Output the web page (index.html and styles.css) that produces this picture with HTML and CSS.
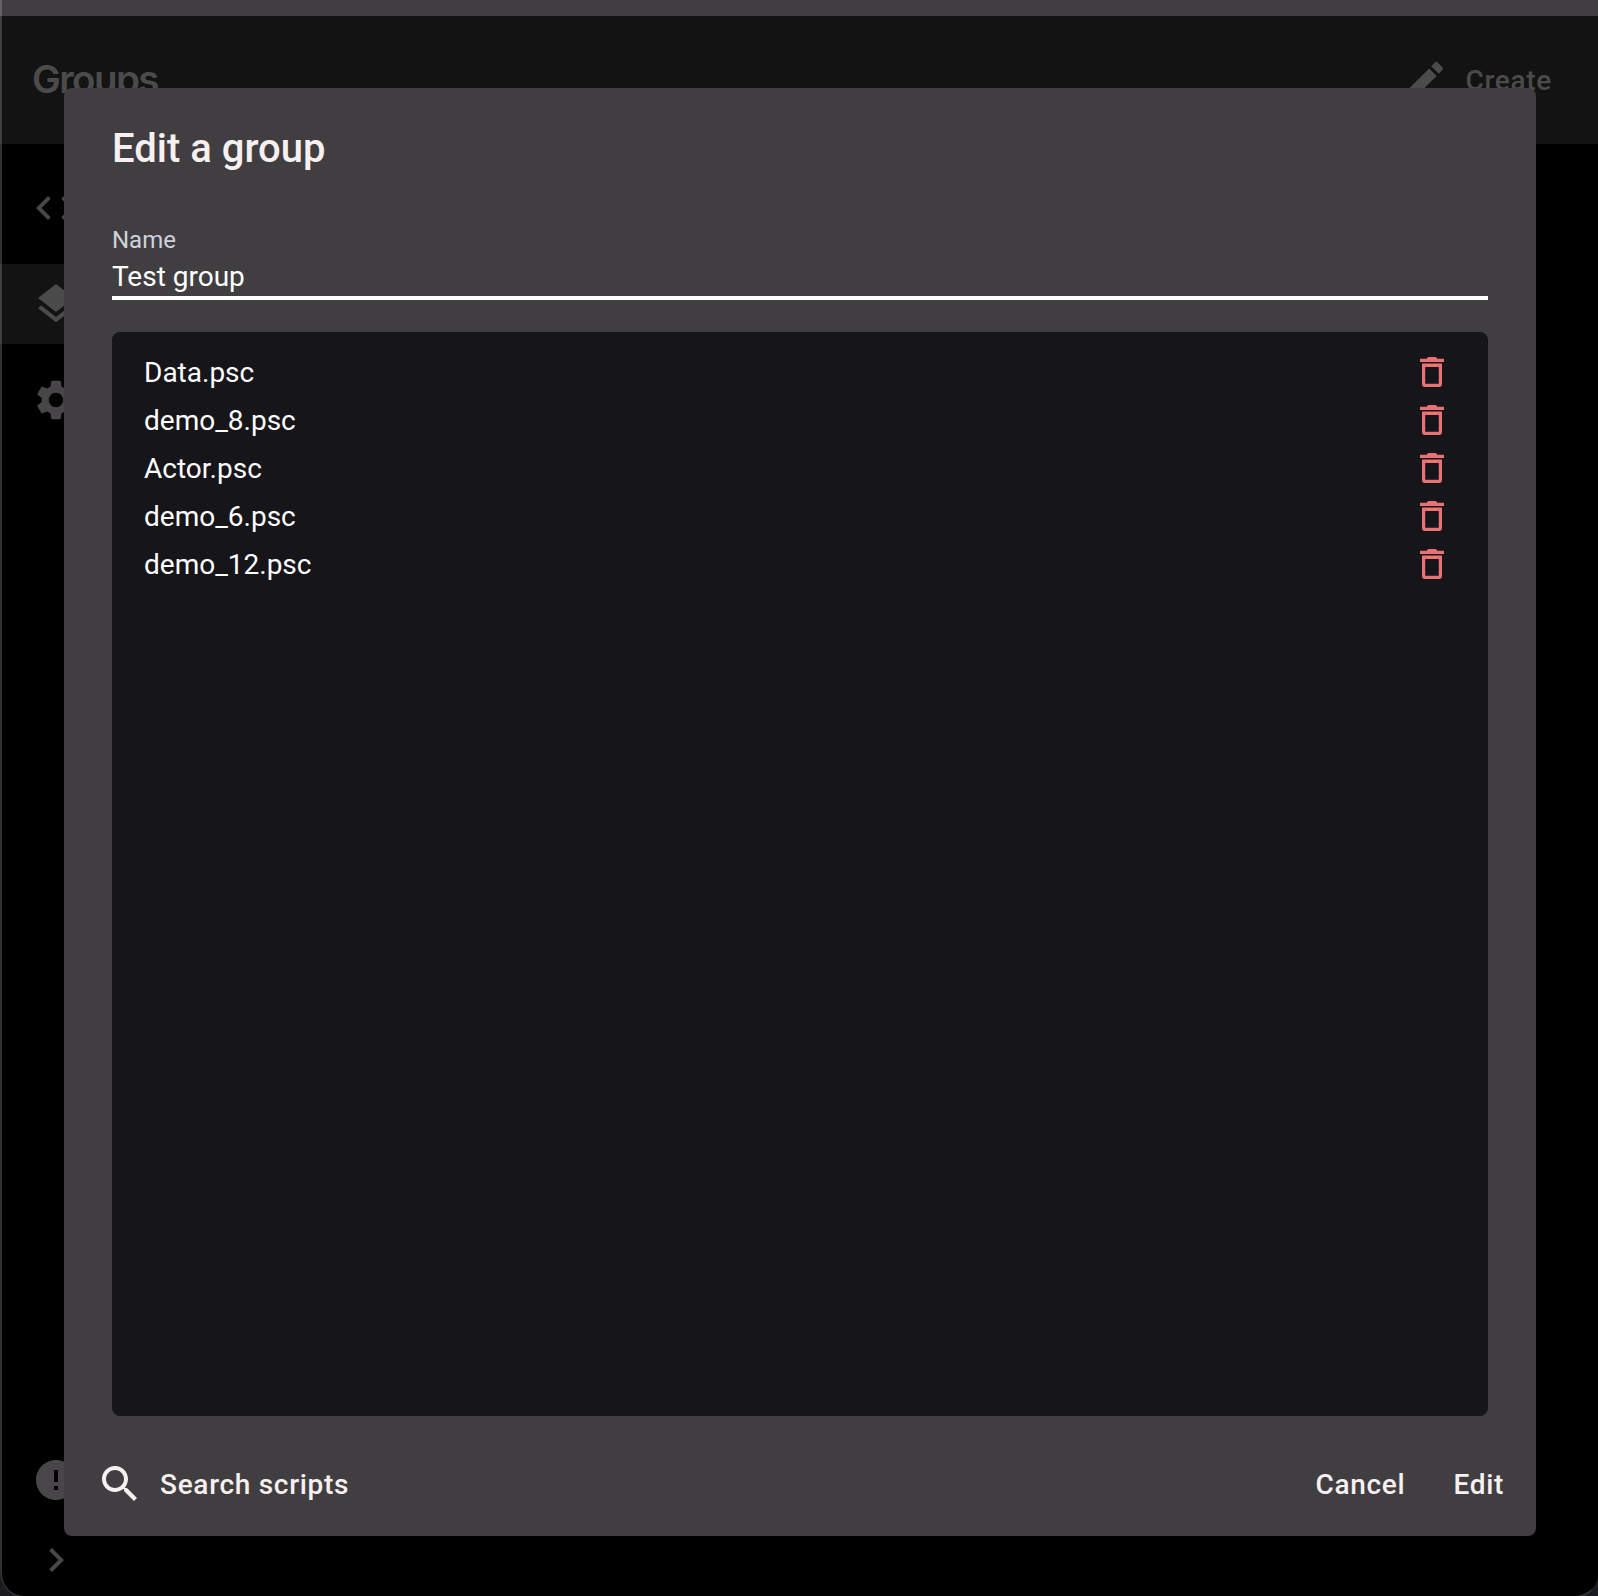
FILE: index.html
```html
<!DOCTYPE html>
<html lang="en">
<head>
<meta charset="utf-8">
<title>Groups</title>
<link rel="stylesheet" href="styles.css">
</head>
<body>
<svg class="defs" aria-hidden="true">
  <symbol id="trash" viewBox="0 0 24 30">
    <path d="M0 1.7h6.5L8.3 0h7.4l1.8 1.7H24V5H0z"/>
    <path fill-rule="evenodd" d="M2 6.6h20V27a3 3 0 0 1-3 3H5a3 3 0 0 1-3-3zM5.2 10v16.8h13.6V10z"/>
  </symbol>
</svg>
<div class="titlebar"></div>
<div class="window">
  <header class="header">
    <h1 class="page-title">Groups</h1>
    <button class="button create">
      <svg class="icon" viewBox="0 0 24 24"><path d="M3 17.25V21h3.75L17.81 9.94l-3.75-3.75L3 17.25zM20.71 7.04c.39-.39.39-1.02 0-1.41l-2.34-2.34a.996.996 0 0 0-1.41 0l-1.83 1.83 3.75 3.75 1.83-1.83z"/></svg>
      <span class="button-text">Create</span>
    </button>
  </header>
  <nav class="nav">
    <a class="nav-item"><svg class="icon" viewBox="0 0 24 24"><path d="M9.4 16.6L4.8 12l4.6-4.6L8 6l-6 6 6 6 1.4-1.4zm5.2 0l4.6-4.6-4.6-4.6L16 6l6 6-6 6-1.4-1.4z"/></svg></a>
    <a class="nav-item selected"><svg class="icon" viewBox="0 0 24 24"><path d="M11.99 18.54l-7.37-5.73L3 14.07l9 7 9-7-1.63-1.27-7.38 5.74zM12 16l7.36-5.73L21 9l-9-7-9 7 1.63 1.27L12 16z"/></svg></a>
    <a class="nav-item"><svg class="icon" viewBox="0 0 24 24"><path d="M19.14 12.94c.04-.3.06-.61.06-.94 0-.32-.02-.64-.07-.94l2.03-1.58c.18-.14.23-.41.12-.61l-1.92-3.32c-.12-.22-.37-.29-.59-.22l-2.39.96c-.5-.38-1.03-.7-1.62-.94l-.36-2.54c-.04-.24-.24-.41-.48-.41h-3.84c-.24 0-.43.17-.47.41l-.36 2.54c-.59.24-1.13.57-1.62.94l-2.39-.96c-.22-.08-.47 0-.59.22L2.74 8.87c-.12.21-.08.47.12.61l2.03 1.58c-.05.3-.09.63-.09.94s.02.64.07.94l-2.03 1.58c-.18.14-.23.41-.12.61l1.92 3.32c.12.22.37.29.59.22l2.39-.96c.5.38 1.03.7 1.62.94l.36 2.54c.05.24.24.41.48.41h3.84c.24 0 .44-.17.47-.41l.36-2.54c.59-.24 1.13-.56 1.62-.94l2.39.96c.22.08.47 0 .59-.22l1.92-3.32c.12-.22.07-.47-.12-.61l-2.01-1.58zM12 15.6c-1.98 0-3.6-1.62-3.6-3.6s1.62-3.6 3.6-3.6 3.6 1.62 3.6 3.6-1.62 3.6-3.6 3.6z"/></svg></a>
    <a class="nav-item about"><svg class="icon" viewBox="0 0 24 24"><path d="M12 2C6.48 2 2 6.48 2 12s4.48 10 10 10 10-4.48 10-10S17.52 2 12 2zm1 15h-2v-2h2v2zm0-4h-2V7h2v6z"/></svg></a>
    <a class="nav-item expand"><svg class="icon" viewBox="0 0 24 24"><path d="M10 6L8.59 7.41 13.17 12l-4.58 4.59L10 18l6-6z"/></svg></a>
  </nav>
</div>
<div class="window-edge"></div>
<div class="overlay">
  <section class="dialog" role="dialog">
    <h2 class="dialog-title">Edit a group</h2>
    <div class="field">
      <label class="field-label">Name</label>
      <div class="field-value">Test group</div>
    </div>
    <ul class="scripts">
      <li class="script">Data.psc<svg class="trash"><use href="#trash"/></svg></li>
      <li class="script">demo_8.psc<svg class="trash"><use href="#trash"/></svg></li>
      <li class="script">Actor.psc<svg class="trash"><use href="#trash"/></svg></li>
      <li class="script">demo_6.psc<svg class="trash"><use href="#trash"/></svg></li>
      <li class="script">demo_12.psc<svg class="trash"><use href="#trash"/></svg></li>
    </ul>
    <footer class="actions">
      <button class="button search">
        <svg class="icon" viewBox="0 0 24 24"><path d="M15.5 14h-.79l-.28-.27C15.41 12.59 16 11.11 16 9.5 16 5.91 13.09 3 9.5 3S3 5.91 3 9.5 5.91 16 9.5 16c1.61 0 3.09-.59 4.23-1.57l.27.28v.79l5 4.99L20.49 19l-4.99-5zm-6 0C7.01 14 5 11.99 5 9.5S7.01 5 9.5 5 14 7.01 14 9.5 11.99 14 9.5 14z"/></svg>
        <span class="button-text">Search scripts</span>
      </button>
      <button class="button"><span class="button-text">Cancel</span></button>
      <button class="button"><span class="button-text">Edit</span></button>
    </footer>
  </section>
</div>
</body>
</html>
```
FILE: styles.css
```css
* { box-sizing: border-box; }

body {
  margin: 0;
  height: 1596px;
  display: flex;
  flex-direction: column;
  overflow: hidden;
  background: #1b1b22;
  font-family: Roboto, sans-serif;
  font-size: 28px;
}

.defs { display: none; }

.titlebar {
  flex: none;
  height: 16px;
  background: #403e41;
}

.window {
  flex: 1;
  display: flex;
  flex-direction: column;
  overflow: hidden;
  border-radius: 0 0 22px 22px;
  background: #000;
}

/* Thin highlight that runs along the window frame */
.window-edge {
  position: absolute;
  inset: -2px -1px -1px 0;
  border: 2px solid rgba(255, 255, 255, .19);
  border-right-width: 1px;
  border-right-color: transparent;
  border-bottom-width: 1px;
  border-radius: 0 0 24px 24px;
}

.header {
  flex: none;
  height: 128px;
  display: flex;
  align-items: center;
  justify-content: space-between;
  padding: 0 46px 0 32px;
  background: #131313;
  color: #4b4b4b;
}

.page-title {
  margin: 0 0 2px;
  font: 600 38.5px/64px Inter, sans-serif;
  letter-spacing: -1.6px;
}

.button {
  display: flex;
  align-items: center;
  gap: 16px;
  padding: 0;
  border: 0;
  background: none;
  color: inherit;
  font: 500 28px/48px Roboto, sans-serif;
  letter-spacing: .7px;
}

.button-text { padding-top: 2px; }

.icon {
  flex: none;
  width: 48px;
  height: 48px;
  fill: currentColor;
}

.nav {
  flex: 1;
  width: 112px;
  display: flex;
  flex-direction: column;
  padding: 24px 0 0;
  gap: 16px;
  color: #484648;
}

.nav-item {
  flex: none;
  display: flex;
  align-items: center;
  height: 80px;
  padding-left: 32px;
}

.nav-item.selected { background: #131313; color: #4b4b4b; }
.nav-item.about { margin-top: auto; height: 64px; }
.nav-item.expand { height: 64px; margin-bottom: 4px; }

.overlay {
  position: absolute;
  inset: 0;
  display: flex;
  padding: 88px 62px 60px 64px;
}

.dialog {
  flex: 1;
  display: flex;
  flex-direction: column;
  border-radius: 8px;
  background: #403e41;
  color: #f8f0f0;
}

.dialog-title {
  margin: 29px 48px 27px;
  font-size: 40px;
  font-weight: 500;
  line-height: 64px;
}

.field {
  margin: 0 48px;
  padding-top: 16px;
  height: 92px;
  border-bottom: 4px solid #fff;
}

.field-label {
  display: block;
  font-size: 24px;
  line-height: 32px;
  color: #ced2dc;
}

.field-value {
  line-height: 42px;
  color: #fff;
}

.scripts {
  flex: 1;
  margin: 32px 48px 0;
  padding: 16px 44px 16px 32px;
  border-radius: 8px;
  background: #16151a;
  list-style: none;
  color: #fff;
}

.script {
  display: flex;
  align-items: center;
  justify-content: space-between;
  height: 48px;
}

.trash {
  width: 24px;
  height: 30px;
  fill: #ec7176;
}

.actions {
  display: flex;
  align-items: center;
  gap: 48px;
  height: 120px;
  padding: 16px 32px 0;
}

.search { margin-right: auto; }
```
